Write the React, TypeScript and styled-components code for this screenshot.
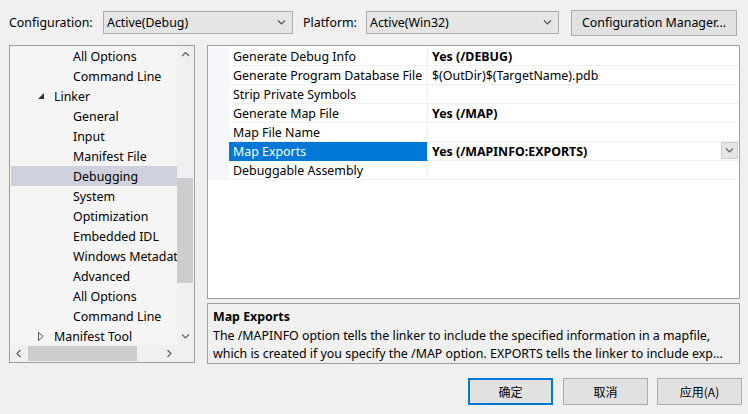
import React from 'react';
import styled, { createGlobalStyle } from 'styled-components';

const Global = createGlobalStyle`
  html, body { margin: 0; padding: 0; background: #f0f0f0; }
  body {
    font-family: "Segoe UI", "Noto Sans", "Noto Sans CJK SC", sans-serif;
    font-size: 12.4px;
    color: #000;
  }
  * { box-sizing: border-box; }
`;

const Window = styled.div`
  width: 748px;
  height: 414px;
  display: flex;
  flex-direction: column;
  background: #f0f0f0;
  overflow: hidden;
`;

const TopBar = styled.div`
  height: 45px;
  display: flex;
  align-items: center;
  padding-left: 9px;
`;

const Label = styled.span<{ $w: number; $ml?: number }>`
  width: ${(p) => p.$w}px;
  margin-left: ${(p) => p.$ml ?? 0}px;
  white-space: nowrap;
  line-height: 16px;
`;

const Combo = styled.div<{ $w: number }>`
  width: ${(p) => p.$w}px;
  height: 23px;
  border: 1px solid #adadad;
  background: #e5e5e5;
  display: flex;
  align-items: center;
  padding-left: 3px;
  padding-right: 6px;
  justify-content: space-between;
`;

const Button = styled.div<{ $w: number; $ml?: number; $primary?: boolean; $h?: number }>`
  width: ${(p) => p.$w}px;
  height: ${(p) => p.$h ?? 26}px;
  margin-left: ${(p) => p.$ml ?? 0}px;
  border: ${(p) => (p.$primary ? '2px solid #0078d7' : '1px solid #adadad')};
  background: #e1e1e1;
  display: flex;
  align-items: center;
  justify-content: center;
  white-space: nowrap;
`;

const Main = styled.div`
  height: 320px;
  display: flex;
  padding-left: 9px;
`;

const Tree = styled.div`
  width: 186px;
  height: 318px;
  border: 1px solid #a0a0a0;
  background: #f5f5f5;
  display: grid;
  grid-template-columns: 1fr 17px;
  grid-template-rows: 1fr 17px;
`;

const TreeContent = styled.div`
  overflow: hidden;
  padding-top: 0px;
`;

const TreeRow = styled.div<{ $indent: number; $selected?: boolean }>`
  height: 20px;
  display: flex;
  align-items: center;
  padding-left: ${(p) => p.$indent}px;
  margin-left: 1px;
  white-space: nowrap;
  background: ${(p) => (p.$selected ? '#cfd1dc' : 'transparent')};
`;

const Expander = styled.span`
  width: 16px;
  display: flex;
  align-items: center;
  justify-content: flex-start;
`;

const VScroll = styled.div`
  display: flex;
  flex-direction: column;
  background: #f0f0f0;
`;

const ScrollBtn = styled.div<{ $size?: number }>`
  flex: 0 0 ${(p) => p.$size ?? 17}px;
  display: flex;
  align-items: center;
  justify-content: center;
`;

const VTrack = styled.div<{ $offset: number; $len: number }>`
  flex: 1;
  display: flex;
  flex-direction: column;
  padding-top: ${(p) => p.$offset}px;
  & > div {
    height: ${(p) => p.$len}px;
    margin: 0 1px 0 0;
    background: #cdcdcd;
  }
`;

const HScroll = styled.div`
  display: flex;
  background: #f0f0f0;
`;

const HTrack = styled.div<{ $offset: number; $len: number }>`
  flex: 1;
  display: flex;
  padding-left: ${(p) => p.$offset}px;
  padding-top: 1px;
  padding-bottom: 1px;
  & > div {
    width: ${(p) => p.$len}px;
    background: #cdcdcd;
  }
`;

const Corner = styled.div`
  background: #f0f0f0;
`;

const RightCol = styled.div`
  width: 533px;
  margin-left: 12px;
  display: flex;
  flex-direction: column;
`;

const Grid = styled.div`
  height: 254px;
  border: 1px solid #a0a0a0;
  background: #fff;
  padding-top: 1px;
  display: flex;
  flex-direction: column;
`;

const PropRow = styled.div`
  height: 19px;
  display: grid;
  grid-template-columns: 21px 199px 1fr;
`;

const Gutter = styled.div`
  background: #f5f7fa;
`;

const NameCell = styled.div<{ $selected?: boolean }>`
  display: flex;
  align-items: center;
  padding-left: 4px;
  white-space: nowrap;
  overflow: hidden;
  border-bottom: 1px solid ${(p) => (p.$selected ? '#0078d7' : '#f0f0f0')};
  border-right: 1px solid #f0f0f0;
  background: ${(p) => (p.$selected ? '#0078d7' : '#fff')};
  color: ${(p) => (p.$selected ? '#fff' : '#000')};
`;

const ValueCell = styled.div<{ $bold?: boolean }>`
  display: flex;
  align-items: center;
  justify-content: space-between;
  padding-left: 4px;
  padding-right: 1px;
  white-space: nowrap;
  border-bottom: 1px solid #f0f0f0;
  font-weight: ${(p) => (p.$bold ? 700 : 400)};
`;

const DropBtn = styled.div`
  width: 17px;
  height: 17px;
  background: #e5e5e5;
  border: 1px solid #cfcfcf;
  display: flex;
  align-items: center;
  justify-content: center;
  margin-top: -1px;
`;

const Desc = styled.div`
  margin-top: 4px;
  height: 61px;
  border: 1px solid #a0a0a0;
  background: #f0f0f0;
  padding: 4px 0 0 5px;
  line-height: 18.5px;
  white-space: nowrap;
  overflow: hidden;
`;

const DescTitle = styled.div`
  font-weight: 700;
`;

const Footer = styled.div`
  flex: 1;
  display: flex;
  justify-content: flex-end;
  align-items: flex-start;
  padding-top: 13px;
  padding-right: 6px;
  font-family: "Noto Sans CJK SC", "Segoe UI", sans-serif;
  font-size: 12px;
`;

const Chevron = ({ dir = 'down', color = '#555' }: { dir?: 'down' | 'up' | 'left' | 'right'; color?: string }) => {
  const pts: Record<string, string> = {
    down: '1,1.5 4.5,5 8,1.5',
    up: '1,5 4.5,1.5 8,5',
    left: '5.5,1 2,4.5 5.5,8',
    right: '2.5,1 6,4.5 2.5,8',
  };
  const vertical = dir === 'down' || dir === 'up';
  return (
    <svg width={vertical ? 9 : 8} height={vertical ? 7 : 9} viewBox={vertical ? '0 0 9 7' : '0 0 8 9'}>
      <polyline points={pts[dir]} fill="none" stroke={color} strokeWidth="1.2" />
    </svg>
  );
};

const treeItems: { text: string; level: number; exp?: 'open' | 'closed'; selected?: boolean }[] = [
  { text: 'All Options', level: 2 },
  { text: 'Command Line', level: 2 },
  { text: 'Linker', level: 1, exp: 'open' },
  { text: 'General', level: 2 },
  { text: 'Input', level: 2 },
  { text: 'Manifest File', level: 2 },
  { text: 'Debugging', level: 2, selected: true },
  { text: 'System', level: 2 },
  { text: 'Optimization', level: 2 },
  { text: 'Embedded IDL', level: 2 },
  { text: 'Windows Metadata', level: 2 },
  { text: 'Advanced', level: 2 },
  { text: 'All Options', level: 2 },
  { text: 'Command Line', level: 2 },
  { text: 'Manifest Tool', level: 1, exp: 'closed' },
];

const props: { name: string; value: string; bold?: boolean; selected?: boolean }[] = [
  { name: 'Generate Debug Info', value: 'Yes (/DEBUG)', bold: true },
  { name: 'Generate Program Database File', value: '$(OutDir)$(TargetName).pdb' },
  { name: 'Strip Private Symbols', value: '' },
  { name: 'Generate Map File', value: 'Yes (/MAP)', bold: true },
  { name: 'Map File Name', value: '' },
  { name: 'Map Exports', value: 'Yes (/MAPINFO:EXPORTS)', bold: true, selected: true },
  { name: 'Debuggable Assembly', value: '' },
];

export default function App() {
  return (
    <>
      <Global />
      <Window>
        <TopBar>
          <Label $w={94}>Configuration:</Label>
          <Combo $w={190}>
            <span>Active(Debug)</span>
            <Chevron />
          </Combo>
          <Label $w={63} $ml={10}>Platform:</Label>
          <Combo $w={193}>
            <span>Active(Win32)</span>
            <Chevron />
          </Combo>
          <Button $w={166} $ml={12}>Configuration Manager...</Button>
        </TopBar>
        <Main>
          <Tree>
            <TreeContent>
              {treeItems.map((it, i) => (
                <TreeRow key={i} $indent={it.level === 1 ? 27 : 62} $selected={it.selected}>
                  {it.exp && (
                    <Expander>
                      {it.exp === 'open' ? (
                        <svg width="6" height="6" viewBox="0 0 6 6">
                          <polygon points="6,0 6,6 0,6" fill="#333" />
                        </svg>
                      ) : (
                        <svg width="6" height="9" viewBox="0 0 6 9">
                          <polygon points="0.5,0.5 5.2,4.5 0.5,8.5" fill="none" stroke="#555" strokeWidth="1" />
                        </svg>
                      )}
                    </Expander>
                  )}
                  <span>{it.text}</span>
                </TreeRow>
              ))}
            </TreeContent>
            <VScroll>
              <ScrollBtn>
                <Chevron dir="up" color="#606060" />
              </ScrollBtn>
              <VTrack $offset={115} $len={105}>
                <div />
              </VTrack>
              <ScrollBtn>
                <Chevron dir="down" color="#606060" />
              </ScrollBtn>
            </VScroll>
            <HScroll>
              <ScrollBtn>
                <Chevron dir="left" color="#606060" />
              </ScrollBtn>
              <HTrack $offset={1} $len={109}>
                <div />
              </HTrack>
              <ScrollBtn>
                <Chevron dir="right" color="#606060" />
              </ScrollBtn>
            </HScroll>
            <Corner />
          </Tree>
          <RightCol>
            <Grid>
              {props.map((p, i) => (
                <PropRow key={i}>
                  <Gutter />
                  <NameCell $selected={p.selected}>{p.name}</NameCell>
                  <ValueCell $bold={p.bold}>
                    <span>{p.value}</span>
                    {p.selected && (
                      <DropBtn>
                        <Chevron color="#666" />
                      </DropBtn>
                    )}
                  </ValueCell>
                </PropRow>
              ))}
            </Grid>
            <Desc>
              <DescTitle>Map Exports</DescTitle>
              <div>The /MAPINFO option tells the linker to include the specified information in a mapfile,</div>
              <div>which is created if you specify the /MAP option. EXPORTS tells the linker to include exp...</div>
            </Desc>
          </RightCol>
        </Main>
        <Footer>
          <Button $w={85} $h={27} $primary>确定</Button>
          <Button $w={85} $h={27} $ml={10}>取消</Button>
          <Button $w={85} $h={27} $ml={9}>应用(A)</Button>
        </Footer>
      </Window>
    </>
  );
}
